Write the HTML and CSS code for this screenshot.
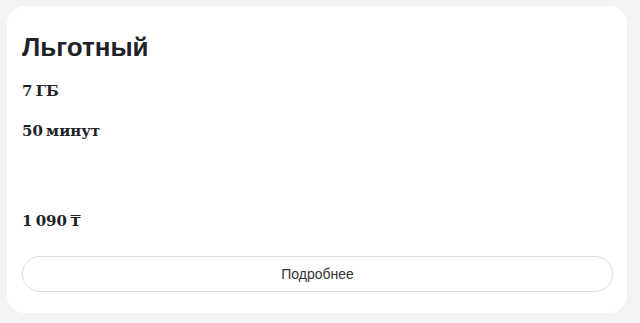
FILE: index.html
```html
<!DOCTYPE html>
<html lang="ru">
<head>
    <meta charset="UTF-8">
    <meta name="viewport" content="width=device-width, initial-scale=1.0">
    <title>Льготный</title>
    <link rel="stylesheet" href="styles.css">
</head>
<body>
    <!-- Карточка тарифа -->
    <div class="tariff-card">
        <h2 class="tariff-title">Льготный</h2>
        <p class="tariff-option">7 ГБ</p>
        <p class="tariff-option">50 минут</p>
        <div class="tariff-bottom">
            <p class="tariff-price">1 090 ₸</p>
            <button class="more-button">Подробнее</button>
        </div>
    </div>
</body>
</html>
```

FILE: styles.css
```css
body {
    font-family: "Liberation Sans", Arial, sans-serif;
    background-color: #f3f3f3;
    color: #1f2229;
    margin: 0;
    padding: 6px 13px 10px 7px;
}
.tariff-card {
    background-color: #fff;
    border-radius: 18px;
    height: 307px;
    box-sizing: border-box;
    padding: 27px 14px 21px 15px;
    display: flex;
    flex-direction: column;
}
.tariff-title {
    font-size: 26px;
    font-weight: 700;
    line-height: 28px;
    margin: 0 0 21px;
}
.tariff-option {
    font-family: "DejaVu Serif", serif;
    font-weight: 700;
    font-size: 15px;
    line-height: 18px;
    margin: 0 0 22px;
    word-spacing: -2px;
}
.tariff-bottom {
    margin-top: auto;
}
.tariff-price {
    font-family: "DejaVu Serif", serif;
    font-weight: 700;
    font-size: 15px;
    line-height: 18px;
    margin: 0 0 26px;
    word-spacing: -2px;
}
.more-button {
    display: block;
    width: 100%;
    height: 36px;
    background-color: #fff;
    border: 1px solid #dcdcdc;
    border-radius: 18px;
    font-family: "Liberation Sans", Arial, sans-serif;
    font-size: 14px;
    color: #333;
    cursor: pointer;
}
```
